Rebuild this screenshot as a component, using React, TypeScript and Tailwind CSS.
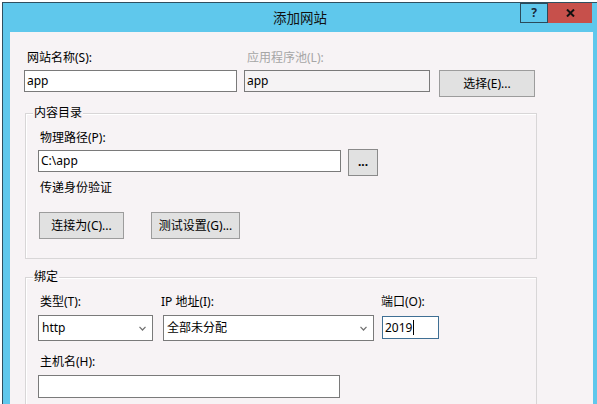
import React from 'react'

const font = "font-['Segoe_UI','Noto_Sans','Noto_Sans_CJK_SC',sans-serif]"

function Button({ label, w }: { label: string; w: string }) {
  return (
    <div
      className={`${w} h-[27px] flex items-center justify-center border border-[#9c9c9c] bg-[#e1e1e1] text-[12px] leading-[16px] text-black`}
    >
      {label}
    </div>
  )
}

function Field({ value, w, h = 'h-[22px]', disabled = false }: { value: string; w: string; h?: string; disabled?: boolean }) {
  return (
    <div
      className={`${w} ${h} flex items-center pl-[2px] border border-[#7a7a7a] ${disabled ? 'bg-[#f5f3f4]' : 'bg-white'} text-[12px] leading-[16px] text-black`}
    >
      {value}
    </div>
  )
}

function Select({ value, w }: { value: string; w: string }) {
  return (
    <div className={`${w} h-[26px] flex items-center justify-between pl-[3px] pr-[6px] border border-[#7a7a7a] bg-white text-[12px] leading-[16px] text-black`}>
      <span>{value}</span>
      <svg width="7" height="5" viewBox="0 0 7 5">
        <path d="M0.5 0.8 L3.5 4 L6.5 0.8" fill="none" stroke="#707070" strokeWidth="1.2" />
      </svg>
    </div>
  )
}

function Group({ title, className, children }: { title: string; className: string; children: React.ReactNode }) {
  return (
    <div className={`relative border border-[#d8d6d7] shadow-[inset_1px_1px_0_#ffffff] ${className}`}>
      <span className="absolute -top-[9px] left-[7px] px-[1px] bg-[#f7f3f5] text-[12px] leading-[16px] text-black">{title}</span>
      {children}
    </div>
  )
}

export default function App() {
  return (
    <div className={`w-[597px] h-[404px] overflow-hidden bg-white ${font}`}>
      <div className="ml-[2px] mt-[2px] w-[595px] h-[402px] border-l border-t border-[#2f4f5f] bg-[#5fc8ec] flex flex-col">
        <div className="relative h-[29px] shrink-0 flex items-center justify-center">
          <span className="text-[13.5px] leading-[18px] text-[#111]">添加网站</span>
          <div className="absolute top-0 right-[5px] flex h-[20px]">
            <div className="w-[28px] h-full flex items-center justify-center border border-[#2a4a5a] text-[12px] font-bold text-[#1a2a3a]">?</div>
            <div className="w-[44px] h-full flex items-center justify-center bg-[#c7504b]">
              <svg width="9" height="8" viewBox="0 0 9 8">
                <path d="M1 0.5 L8 7.5 M8 0.5 L1 7.5" stroke="#111" strokeWidth="2" />
              </svg>
            </div>
          </div>
        </div>

        <div className="flex flex-1 min-h-0">
          <div className="ml-[7px] w-[583px] bg-[#f7f3f5] flex flex-col text-black">
            {/* site name row */}
            <div className="flex items-start pt-[18px] pl-[14px]">
              <div className="flex flex-col">
                <span className="pl-[3px] text-[12px] leading-[16px]">网站名称(S):</span>
                <div className="mt-[4px]"><Field value="app" w="w-[213px]" /></div>
              </div>
              <div className="ml-[7px] flex flex-col">
                <span className="pl-[3px] text-[12px] leading-[16px] text-[#a6a6a6]">应用程序池(L):</span>
                <div className="mt-[4px]"><Field value="app" w="w-[186px]" disabled /></div>
              </div>
              <div className="ml-[9px] mt-[20px]">
                <Button label="选择(E)..." w="w-[96px]" />
              </div>
            </div>

            {/* content directory */}
            <Group title="内容目录" className="ml-[15px] mt-[16px] w-[512px] h-[146px] shrink-0">
              <div className="flex flex-col pt-[16px] pl-[12px]">
                <span className="pl-[2px] text-[12px] leading-[16px]">物理路径(P):</span>
                <div className="mt-[4px] flex items-start">
                  <Field value="C:\app" w="w-[303px]" />
                  <div className="ml-[7px] -mt-[1px] w-[30px] h-[27px] flex items-end justify-center pb-[9px] border border-[#8a8a8a] bg-[#e1e1e1] text-[12px] leading-[8px] font-bold">
                    ...
                  </div>
                </div>
                <span className="mt-[4px] pl-[2px] text-[12px] leading-[16px]">传递身份验证</span>
                <div className="mt-[16px] pl-[1px] flex gap-[27px]">
                  <Button label="连接为(C)..." w="w-[85px]" />
                  <Button label="测试设置(G)..." w="w-[89px]" />
                </div>
              </div>
            </Group>

            {/* binding */}
            <Group title="绑定" className="ml-[15px] mt-[18px] w-[512px] h-[200px] shrink-0">
              <div className="flex flex-col pt-[16px] pl-[12px]">
                <div className="flex items-start">
                  <div className="flex flex-col">
                    <span className="pl-[2px] text-[12px] leading-[16px]">类型(T):</span>
                    <div className="mt-[5px]"><Select value="http" w="w-[115px]" /></div>
                  </div>
                  <div className="ml-[10px] flex flex-col">
                    <span className="-ml-[2px] text-[12px] leading-[16px]">IP 地址(I):</span>
                    <div className="mt-[5px]"><Select value="全部未分配" w="w-[211px]" /></div>
                  </div>
                  <div className="ml-[8px] flex flex-col">
                    <span className="-ml-[1px] text-[12px] leading-[16px]">端口(O):</span>
                    <div className="mt-[6px] w-[57px] h-[23px] flex items-center pl-[2px] border border-[#3f6f94] bg-white text-[12px] leading-[16px]">
                      2019<span className="ml-[1px] inline-block w-px h-[15px] bg-black" />
                    </div>
                  </div>
                </div>
                <span className="mt-[13px] pl-[2px] text-[12px] leading-[16px]">主机名(H):</span>
                <div className="mt-[5px]"><Field value="" w="w-[302px]" h="h-[23px]" /></div>
              </div>
            </Group>
          </div>
          <div className="flex-1" />
        </div>
      </div>
    </div>
  )
}
